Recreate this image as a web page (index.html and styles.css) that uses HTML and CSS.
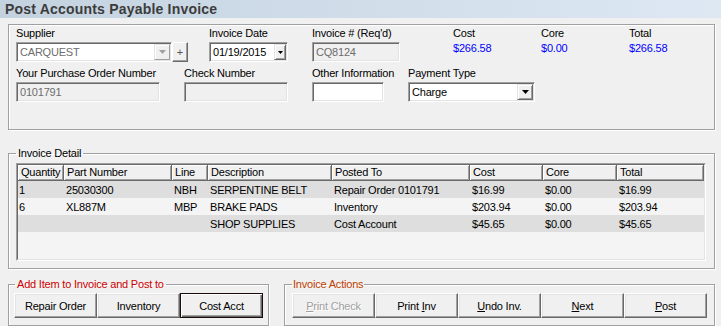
FILE: index.html
```html
<!DOCTYPE html>
<html lang="en">
<head>
    <meta charset="UTF-8">
    <title>Post Accounts Payable Invoice</title>
    <link rel="stylesheet" href="styles.css">
</head>
<body>
    <div class="titlebar">Post Accounts Payable Invoice</div>

    <div class="group top-group">
        <div class="row row-one">
            <div class="field f-supplier">
                <label>Supplier</label>
                <div class="combo-wrap">
                    <div class="box combo">
                        <span class="value disabled-text">CARQUEST</span>
                        <span class="drop drop-disabled">
                            <svg width="7" height="4" viewBox="0 0 7 4"><polygon points="0,0 7,0 3.5,4" fill="#a0a0a0"/></svg>
                        </span>
                    </div>
                    <button class="plus">+</button>
                </div>
            </div>
            <div class="field f-date">
                <label>Invoice Date</label>
                <div class="box">
                    <span class="value">01/19/2015</span>
                    <span class="drop drop-small">
                        <svg width="5" height="3" viewBox="0 0 5 3"><polygon points="0,0 5,0 2.5,3" fill="#000"/></svg>
                    </span>
                </div>
            </div>
            <div class="field f-invoice">
                <label>Invoice # (Req'd)</label>
                <div class="box box-disabled"><span class="value disabled-text">CQ8124</span></div>
            </div>
            <div class="field f-total">
                <label>Cost</label>
                <div class="amount">$266.58</div>
            </div>
            <div class="field f-total">
                <label>Core</label>
                <div class="amount">$0.00</div>
            </div>
            <div class="field">
                <label>Total</label>
                <div class="amount">$266.58</div>
            </div>
        </div>
        <div class="row row-two">
            <div class="field f-po">
                <label>Your Purchase Order Number</label>
                <div class="box box-disabled"><span class="value disabled-text">0101791</span></div>
            </div>
            <div class="field f-check">
                <label>Check Number</label>
                <div class="box box-disabled"></div>
            </div>
            <div class="field f-other">
                <label>Other Information</label>
                <div class="box"></div>
            </div>
            <div class="field f-payment">
                <label>Payment Type</label>
                <div class="box">
                    <span class="value">Charge</span>
                    <span class="drop">
                        <svg width="7" height="4" viewBox="0 0 7 4"><polygon points="0,0 7,0 3.5,4" fill="#000"/></svg>
                    </span>
                </div>
            </div>
        </div>
    </div>

    <fieldset class="group detail">
        <legend>Invoice Detail</legend>
        <div class="list">
            <div class="list-inner">
                <div class="list-row list-head">
                    <div>Quantity</div>
                    <div>Part Number</div>
                    <div>Line</div>
                    <div>Description</div>
                    <div>Posted To</div>
                    <div>Cost</div>
                    <div>Core</div>
                    <div>Total</div>
                </div>
                <div class="list-row shaded">
                    <div>1</div>
                    <div>25030300</div>
                    <div>NBH</div>
                    <div>SERPENTINE BELT</div>
                    <div>Repair Order 0101791</div>
                    <div>$16.99</div>
                    <div>$0.00</div>
                    <div>$16.99</div>
                </div>
                <div class="list-row">
                    <div>6</div>
                    <div>XL887M</div>
                    <div>MBP</div>
                    <div>BRAKE PADS</div>
                    <div>Inventory</div>
                    <div>$203.94</div>
                    <div>$0.00</div>
                    <div>$203.94</div>
                </div>
                <div class="list-row shaded">
                    <div></div>
                    <div></div>
                    <div></div>
                    <div>SHOP SUPPLIES</div>
                    <div>Cost Account</div>
                    <div>$45.65</div>
                    <div>$0.00</div>
                    <div>$45.65</div>
                </div>
            </div>
        </div>
    </fieldset>

    <div class="bottom">
        <fieldset class="group add-group">
            <legend>Add Item to Invoice and Post to</legend>
            <div class="buttons">
                <button class="btn">Repair Order</button>
                <button class="btn">Inventory</button>
                <button class="btn btn-default">Cost Acct</button>
            </div>
        </fieldset>
        <fieldset class="group actions-group">
            <legend>Invoice Actions</legend>
            <div class="buttons">
                <button class="btn btn-disabled"><u>P</u>rint Check</button>
                <button class="btn">Print <u>I</u>nv</button>
                <button class="btn"><u>U</u>ndo Inv.</button>
                <button class="btn"><u>N</u>ext</button>
                <button class="btn"><u>P</u>ost</button>
            </div>
        </fieldset>
    </div>
</body>
</html>
```

FILE: styles.css
```css
body {
    margin: 0;
    background: #f0f0f0;
    font-family: "Liberation Sans", Arial, sans-serif;
    font-size: 11px;
    letter-spacing: -0.2px;
    color: #000;
    overflow: hidden;
}

.titlebar {
    height: 18px;
    line-height: 18px;
    padding-left: 5px;
    margin-bottom: 6px;
    background: linear-gradient(to right, #c4d2e0, #dde8f3);
    color: #3c3c3c;
    font-size: 14px;
    font-weight: bold;
    letter-spacing: 0.2px;
}

.group {
    min-width: 0;
    margin: 0 6px 0 8px;
    border: 1px solid #a0a0a0;
    box-shadow: inset 1px 1px 0 #fff, 1px 1px 0 #fff;
}

legend {
    padding: 0 2px;
    line-height: 13px;
}

/* top block */
.top-group {
    height: 106px;
    box-sizing: border-box;
    padding: 2px 0 0 7px;
}

.row {
    display: flex;
}

.row-two {
    margin-top: 5px;
}

.field label {
    display: block;
    line-height: 13px;
    margin-bottom: 2px;
    white-space: nowrap;
}

.f-supplier { width: 172px; margin-right: 21px; }
.f-date { width: 79px; margin-right: 24px; }
.f-invoice { width: 88px; margin-right: 53px; }
.f-total { width: 88px; }
.f-po { width: 144px; margin-right: 24px; }
.f-check { width: 104px; margin-right: 24px; }
.f-other { width: 72px; margin-right: 24px; }
.f-payment { width: 127px; }

.amount {
    color: #0000ff;
    line-height: 13px;
}

.combo-wrap {
    display: flex;
}

.box {
    display: flex;
    align-items: center;
    height: 20px;
    box-sizing: border-box;
    padding: 1px 1px 1px 3px;
    border: 1px solid;
    border-color: #a0a0a0 #fff #fff #a0a0a0;
    box-shadow: inset 1px 1px 0 #696969, inset -1px -1px 0 #e3e3e3;
    background: #fff;
}

.combo {
    flex: 1;
}

.box-disabled {
    background: #f0f0f0;
}

.value {
    flex: 1;
    overflow: hidden;
    white-space: nowrap;
    line-height: 16px;
}

.disabled-text {
    color: #6d6d6d;
}

.drop {
    display: flex;
    align-items: center;
    justify-content: center;
    width: 16px;
    height: 16px;
    box-sizing: border-box;
    border: 1px solid;
    border-color: #e3e3e3 #696969 #696969 #e3e3e3;
    box-shadow: inset 1px 1px 0 #fff, inset -1px -1px 0 #a0a0a0;
    background: #f0f0f0;
}

.drop-small {
    width: 12px;
}

.drop-disabled {
    border-color: #e3e3e3 #a0a0a0 #a0a0a0 #e3e3e3;
    box-shadow: inset 1px 1px 0 #fff;
}

.plus {
    width: 16px;
    height: 20px;
    padding: 0;
    font-family: inherit;
    font-size: 11px;
    color: #555;
    background: #f0f0f0;
    border: 1px solid;
    border-color: #fff #696969 #696969 #fff;
    box-shadow: inset -1px -1px 0 #a0a0a0;
}

/* invoice detail */
.detail {
    margin-top: 17px;
    padding: 0 8px 7px 7px;
}

.list {
    margin-top: 3px;
    height: 98px;
    box-sizing: border-box;
    border: 1px solid;
    border-color: #a0a0a0 #fff #fff #a0a0a0;
}

.list-inner {
    height: 100%;
    box-sizing: border-box;
    border: 1px solid;
    border-color: #696969 #e3e3e3 #e3e3e3 #696969;
    background: #f4f4f4;
}

.list-row {
    display: grid;
    grid-template-columns: 46px 108px 36px 124px 138px 73px 74px 1fr;
    height: 17px;
    line-height: 16px;
}

.list-row div {
    padding: 1px 0 0 2px;
    white-space: nowrap;
    overflow: hidden;
}

.list-row div:first-child {
    padding-left: 1px;
}

.list-head {
    height: 16px;
}

.list-head div {
    padding: 0 0 0 3px;
    line-height: 15px;
    border-right: 1px solid #696969;
    border-bottom: 1px solid #696969;
    box-shadow: inset 1px 1px 0 #fff, inset -1px -1px 0 #a0a0a0;
    background: #f0f0f0;
}

.list-head div:first-child {
    padding-left: 3px;
}

.shaded {
    background: #dedede;
}

/* bottom button groups */
.bottom {
    display: flex;
    margin: 9px 6px 0 8px;
}

.add-group {
    width: 261px;
    box-sizing: border-box;
    margin: 0 15px 0 0;
    padding: 0 4px 7px 5px;
}

.add-group legend {
    margin-left: 1px;
    color: #cc0000;
}

.actions-group {
    flex: 1;
    margin: 0;
    padding: 0 4px 7px 7px;
}

.actions-group legend {
    padding: 0 1px;
    color: #c04000;
}

.buttons {
    display: flex;
    margin-top: 2px;
}

.btn {
    width: 83px;
    height: 25px;
    padding: 0;
    font-family: inherit;
    font-size: 11px;
    letter-spacing: -0.2px;
    color: #000;
    background: #f0f0f0;
    border: 1px solid;
    border-color: #fff #696969 #696969 #fff;
    box-shadow: inset -1px -1px 0 #a0a0a0, inset 1px 1px 0 #e3e3e3;
}

.btn-default {
    border-color: #1a0a0a;
    box-shadow: inset 1px 1px 0 #fff, inset -1px -1px 0 #696969, inset -2px -2px 0 #a0a0a0;
}

.btn-disabled {
    color: #a0a0a0;
    text-shadow: 1px 1px 0 #fff;
}
```
